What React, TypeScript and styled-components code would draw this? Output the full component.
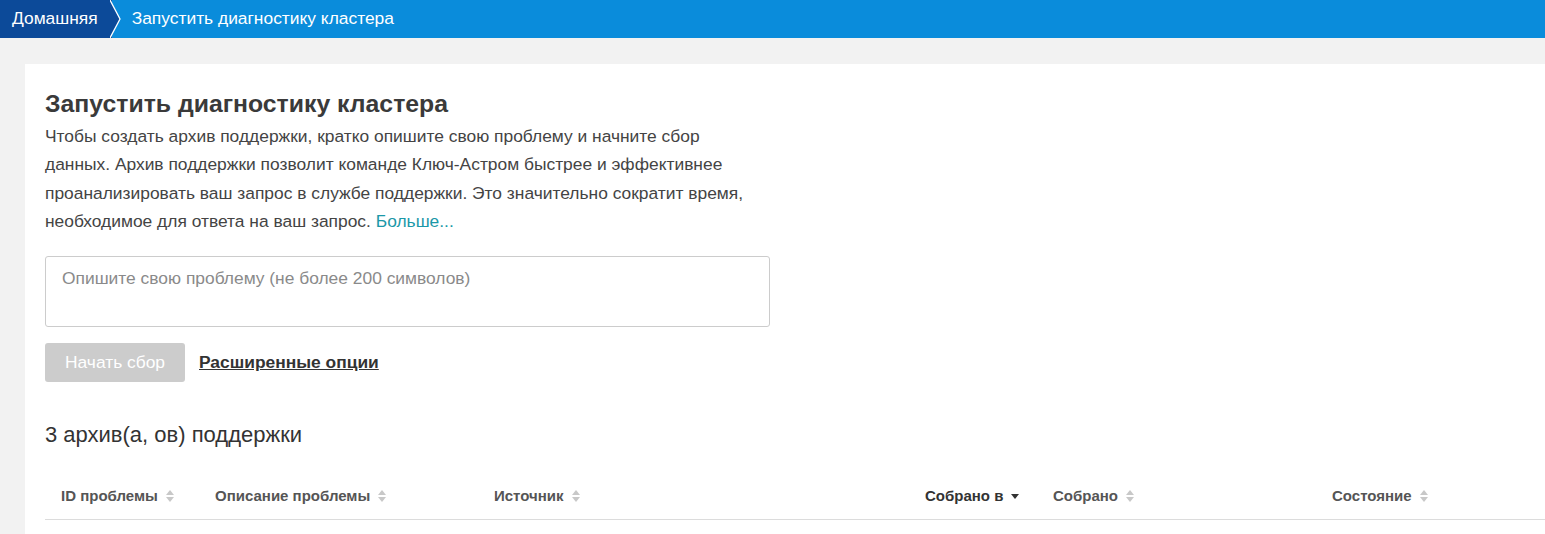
import React from "react";
import styled, { createGlobalStyle } from "styled-components";

const Global = createGlobalStyle`
  html, body { margin: 0; padding: 0; background: #f2f2f2; }
  body { font-family: "Liberation Sans", Arial, sans-serif; color: #333; overflow: hidden; }
  * { box-sizing: border-box; }
`;

const Page = styled.div`
  width: 1545px;
  min-height: 534px;
  background: #f2f2f2;
`;

const Breadcrumbs = styled.nav`
  display: flex;
  height: 38px;
  background: #0a8cdb;
  align-items: stretch;
`;

const Crumb = styled.a<{ $home?: boolean }>`
  position: relative;
  display: flex;
  align-items: center;
  padding: 0 ${(p) => (p.$home ? "14px" : "0")} 1px ${(p) => (p.$home ? "12px" : "20px")};
  background: ${(p) => (p.$home ? "#0c4a99" : "transparent")};
  color: #fff;
  font-size: 17.4px;
  text-decoration: none;
  white-space: nowrap;
`;

const Chevron = styled.svg`
  position: absolute;
  right: -10px;
  top: 0;
  width: 12px;
  height: 38px;
`;

const Card = styled.main`
  margin: 26px 0 0 25px;
  background: #fff;
  padding: 24px 0 0 20px;
  min-height: 470px;
`;

const Intro = styled.section`
  width: 712px;
`;

const Title = styled.h1`
  margin: 0;
  font-size: 24.8px;
  font-weight: bold;
  color: #3a3a3a;
  line-height: 32px;
`;

const Lead = styled.p`
  margin: 2px 0 0;
  font-size: 17.4px;
  line-height: 28.3px;
  color: #444;
`;

const MoreLink = styled.a`
  color: #1b98a8;
  text-decoration: none;
`;

const Problem = styled.textarea`
  display: block;
  width: 725px;
  height: 71px;
  margin-top: 21px;
  padding: 10px 16px;
  border: 1px solid #ccc;
  border-radius: 3px;
  font-family: "Liberation Sans", Arial, sans-serif;
  font-size: 17.4px;
  line-height: 22px;
  resize: none;
  color: #333;
  &::placeholder { color: #8a8a8a; }
`;

const Actions = styled.div`
  display: flex;
  align-items: center;
  gap: 14px;
  margin-top: 16px;
`;

const StartButton = styled.button`
  width: 140px;
  height: 39px;
  border: none;
  border-radius: 3px;
  background: #cccccc;
  color: #fff;
  font-family: "Liberation Sans", Arial, sans-serif;
  font-size: 17.4px;
  padding: 0;
`;

const AdvancedLink = styled.a`
  font-size: 17.4px;
  font-weight: bold;
  color: #333;
  text-decoration: underline;
`;

const Count = styled.h2`
  margin: 40px 0 0;
  font-size: 22px;
  font-weight: normal;
  color: #333;
  line-height: 26px;
`;

const Table = styled.div`
  margin-top: 25px;
  display: grid;
  grid-template-columns: 154px 279px 431px 128px 279px 1fr;
  border-bottom: 1px solid #dcdcdc;
  height: 47px;
`;

const Th = styled.div<{ $active?: boolean }>`
  display: flex;
  align-items: center;
  gap: 8px;
  padding: 0 16px 1px;
  font-size: 15px;
  font-weight: bold;
  color: ${(p) => (p.$active ? "#333" : "#555")};
  white-space: nowrap;
`;

const SortIcon = styled.svg`
  width: 8px;
  height: 12px;
  flex: none;
`;

const Sort: React.FC<{ active?: boolean }> = ({ active }) =>
  active ? (
    <SortIcon viewBox="0 0 8 12">
      <path d="M0 4 L8 4 L4 9 Z" fill="#333" />
    </SortIcon>
  ) : (
    <SortIcon viewBox="0 0 8 12">
      <path d="M4 0 L8 5 L0 5 Z" fill="#c8c8c8" />
      <path d="M0 7 L8 7 L4 12 Z" fill="#c8c8c8" />
    </SortIcon>
  );

const columns: { label: string; active?: boolean }[] = [
  { label: "ID проблемы" },
  { label: "Описание проблемы" },
  { label: "Источник" },
  { label: "Собрано в", active: true },
  { label: "Собрано" },
  { label: "Состояние" },
];

export default function App() {
  return (
    <Page>
      <Global />
      <Breadcrumbs>
        <Crumb $home href="#">
          Домашняя
          <Chevron viewBox="0 0 12 38">
            <path d="M0 0 L10 19 L0 38 Z" fill="#0c4a99" />
            <path d="M0 0 L10 19 L0 38" fill="none" stroke="#fff" strokeWidth="1.3" />
          </Chevron>
        </Crumb>
        <Crumb href="#">Запустить диагностику кластера</Crumb>
      </Breadcrumbs>
      <Card>
        <Intro>
          <Title>Запустить диагностику кластера</Title>
          <Lead>
            Чтобы создать архив поддержки, кратко опишите свою проблему и начните сбор данных. Архив
            поддержки позволит команде Ключ-Астром быстрее и эффективнее проанализировать ваш запрос в
            службе поддержки. Это значительно сократит время, необходимое для ответа на ваш запрос.{" "}
            <MoreLink href="#">Больше...</MoreLink>
          </Lead>
        </Intro>
        <Problem placeholder="Опишите свою проблему (не более 200 символов)" />
        <Actions>
          <StartButton disabled>Начать сбор</StartButton>
          <AdvancedLink href="#">Расширенные опции</AdvancedLink>
        </Actions>
        <Count>3 архив(а, ов) поддержки</Count>
        <Table>
          {columns.map((c) => (
            <Th key={c.label} $active={c.active}>
              {c.label}
              <Sort active={c.active} />
            </Th>
          ))}
        </Table>
      </Card>
    </Page>
  );
}
